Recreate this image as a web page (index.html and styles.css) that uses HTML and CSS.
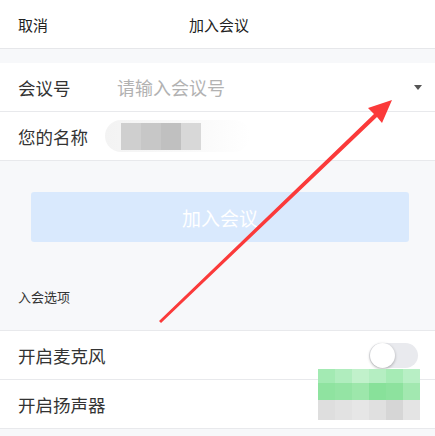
FILE: index.html
```html
<!DOCTYPE html>
<html lang="zh">
<head>
<meta charset="utf-8">
<link rel="stylesheet" href="styles.css">
</head>
<body>
<div class="page">
  <header class="topbar">
    <span class="cancel">取消</span>
    <span class="title">加入会议</span>
  </header>
  <div class="gap-top"></div>
  <section class="form">
    <div class="row">
      <span class="label">会议号</span>
      <span class="placeholder">请输入会议号</span>
      <span class="caret"></span>
    </div>
    <div class="row">
      <span class="label">您的名称</span>
      <span class="name-blur">
        <i class="px p1"></i><i class="px p2"></i><i class="px p3"></i><i class="px p4"></i>
      </span>
    </div>
  </section>
  <div class="btn-area">
    <div class="join-btn">加入会议</div>
  </div>
  <div class="section-title">入会选项</div>
  <section class="options">
    <div class="row opt">
      <span class="label">开启麦克风</span>
      <span class="toggle"><span class="knob"></span></span>
    </div>
    <div class="row opt">
      <span class="label">开启扬声器</span>
    </div>
  </section>
  <div class="green-blur">
    <div class="gb-row g1"><i></i><i></i><i></i><i></i><i></i><i></i></div>
    <div class="gb-row g2"><i></i><i></i><i></i><i></i><i></i><i></i></div>
    <div class="gb-row g3"><i></i><i></i><i></i><i></i><i></i><i></i></div>
  </div>
  <svg class="arrow" width="435" height="436" viewBox="0 0 435 436">
    <polygon points="159,321 161,323 377,117 382,123 392,100 368,108 374,114" fill="#fb3a3a"/>
  </svg>
</div>
</body>
</html>
```
FILE: styles.css
```css
* { box-sizing: border-box; margin: 0; padding: 0; }
html, body { background: #f7f8fa; }
body {
  font-family: "Noto Sans CJK SC", "Noto Sans", sans-serif;
  color: #333;
  width: 435px;
  height: 436px;
  overflow: hidden;
}
.page { position: relative; width: 435px; height: 436px; }
.topbar {
  height: 49px;
  background: #fff;
  border-bottom: 1px solid #e6e7ea;
  display: flex;
  align-items: center;
  padding-left: 18px;
  font-size: 15px;
  color: #222;
}
.cancel { width: 171px; }
.gap-top { height: 14px; }
.form { background: #fff; }
.row {
  height: 49px;
  display: flex;
  align-items: center;
  padding-left: 18px;
  border-bottom: 1px solid #e8e9ec;
  font-size: 17.5px;
  color: #333;
}
.label { width: 99px; flex: none; }
.placeholder { color: #b2b2b2; flex: 1; font-size: 18px; }
.caret {
  width: 0; height: 0;
  border-left: 4px solid transparent;
  border-right: 4px solid transparent;
  border-top: 5px solid #555;
  margin-right: 13px;
}
.name-blur {
  margin-left: -12px;
  width: 145px;
  height: 32px;
  border-radius: 16px;
  background: linear-gradient(90deg, #f3f3f3, #f9f9f9 60%, #fff);
  display: flex;
  align-items: center;
  padding-left: 16px;
}
.px { display: block; width: 20px; height: 27px; }
.p1 { background: #cfcfcf; }
.p2 { background: #c7c7c7; }
.p3 { background: #c0c0c0; }
.p4 { background: #d8d8d8; }
.btn-area { padding: 31px 26px 0 31px; height: 81px; }
.join-btn {
  height: 50px;
  background: #d9e9fd;
  border-radius: 3px;
  color: #fff;
  font-size: 19px;
  display: flex;
  align-items: center;
  justify-content: center;
}
.section-title {
  height: 89px;
  padding: 45px 0 0 18px;
  font-size: 13px;
  color: #333;
  line-height: 20px;
  border-bottom: 1px solid #e8e9ec;
}
.options { background: #fff; }
.opt { height: 49px; justify-content: space-between; }
.toggle {
  width: 49px; height: 25px;
  border-radius: 13px;
  background: #e9eaee;
  margin-right: 17px;
  position: relative;
}
.knob {
  position: absolute;
  left: 1px; top: 0;
  width: 25px; height: 25px;
  border-radius: 50%;
  background: #fff;
  box-shadow: 0 1px 3px rgba(0,0,0,0.3);
}
.green-blur {
  position: absolute;
  left: 318px; top: 369px;
  width: 102px;
}
.gb-row { display: flex; }
.gb-row i { display: block; width: 17px; }
.g1 { height: 14px; }
.g2 { height: 17px; }
.g3 { height: 20px; }
.g1 i:nth-child(1) { background: #a3eab3; }
.g1 i:nth-child(2) { background: #b0edbe; }
.g1 i:nth-child(3) { background: #c1f1cb; }
.g1 i:nth-child(4) { background: #b5eec2; }
.g1 i:nth-child(5) { background: #a6ebb5; }
.g1 i:nth-child(6) { background: #b8efc5; }
.g2 i:nth-child(1) { background: #8fe3a0; }
.g2 i:nth-child(2) { background: #94e4a4; }
.g2 i:nth-child(3) { background: #9de7ab; }
.g2 i:nth-child(4) { background: #88e19a; }
.g2 i:nth-child(5) { background: #8de29e; }
.g2 i:nth-child(6) { background: #a2e8b0; }
.g3 i:nth-child(1) { background: #dedede; }
.g3 i:nth-child(2) { background: #e2e2e2; }
.g3 i:nth-child(3) { background: #e6e6e6; }
.g3 i:nth-child(4) { background: #e0e0e0; }
.g3 i:nth-child(5) { background: #d6d6d6; }
.g3 i:nth-child(6) { background: #e4e4e4; }
.arrow { position: absolute; left: 0; top: 0; pointer-events: none; }
```
